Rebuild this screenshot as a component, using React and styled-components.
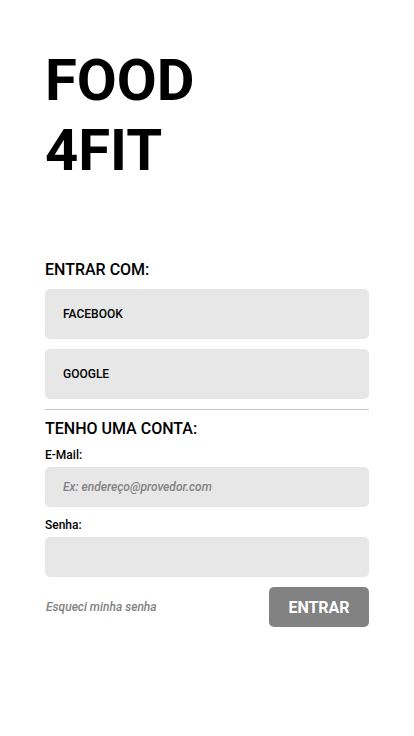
import React from "react";
import styled, { createGlobalStyle } from "styled-components";

const GlobalStyle = createGlobalStyle`
  *, *::before, *::after { box-sizing: border-box; }
  body {
    margin: 0;
    background: #fff;
    color: #000;
    font-family: Roboto, sans-serif;
  }
`;

const Page = styled.main`
  display: flex;
  flex-direction: column;
  padding: 45px 45px 40px;
`;

const Brand = styled.h1`
  margin: 0 0 76px;
  font-size: 58px;
  line-height: 70px;
  font-weight: 700;
`;

const BrandLine = styled.span`
  display: block;
`;

const Section = styled.section`
  display: flex;
  flex-direction: column;
  gap: ${({ $gap }) => $gap}px;
`;

const SectionTitle = styled.h2`
  margin: 0;
  font-size: 16px;
  line-height: 18px;
  font-weight: 500;
`;

const ProviderList = styled.div`
  display: flex;
  flex-direction: column;
  gap: 10px;
`;

const ProviderButton = styled.button`
  height: 50px;
  padding: 0 18px;
  border: 0;
  border-radius: 5px;
  background: #e7e7e7;
  color: #000;
  font: 500 12px/14px Roboto, sans-serif;
  text-align: left;
  cursor: pointer;
`;

const Divider = styled.hr`
  width: 100%;
  height: 1px;
  margin: 10px 0;
  border: 0;
  background: #c4c4c4;
`;

const Form = styled.form`
  display: flex;
  flex-direction: column;
  gap: 10px;
`;

const Field = styled.div`
  display: flex;
  flex-direction: column;
  gap: 4px;
`;

const Label = styled.label`
  font-size: 12px;
  line-height: 16px;
  font-weight: 500;
`;

const Input = styled.input`
  width: 100%;
  height: 40px;
  padding: 0 18px;
  border: 0;
  border-radius: 5px;
  background: #e7e7e7;
  color: #000;
  font: 500 12px/14px Roboto, sans-serif;

  &::placeholder {
    color: #828282;
    font-style: italic;
    opacity: 1;
  }
`;

const Actions = styled.div`
  display: flex;
  align-items: center;
  justify-content: space-between;
`;

const ForgotLink = styled.a`
  padding-left: 1px;
  color: #828282;
  font-size: 12px;
  line-height: 14px;
  font-style: italic;
  font-weight: 500;
  text-decoration: none;
`;

const SubmitButton = styled.button`
  width: 100px;
  height: 40px;
  padding: 0;
  border: 0;
  border-radius: 5px;
  background: #828282;
  color: #fff;
  font: 700 16px/19px Roboto, sans-serif;
  cursor: pointer;
`;

export default function App() {
  return (
    <>
      <GlobalStyle />
      <Page>
        <Brand>
          <BrandLine>FOOD</BrandLine>
          <BrandLine>4FIT</BrandLine>
        </Brand>
        <Section $gap={10}>
          <SectionTitle>ENTRAR COM:</SectionTitle>
          <ProviderList>
            <ProviderButton type="button">FACEBOOK</ProviderButton>
            <ProviderButton type="button">GOOGLE</ProviderButton>
          </ProviderList>
        </Section>
        <Divider />
        <Section $gap={9}>
          <SectionTitle>TENHO UMA CONTA:</SectionTitle>
          <Form onSubmit={(event) => event.preventDefault()}>
            <Field>
              <Label htmlFor="email">E-Mail:</Label>
              <Input id="email" type="email" placeholder="Ex: endereço@provedor.com" />
            </Field>
            <Field>
              <Label htmlFor="password">Senha:</Label>
              <Input id="password" type="password" />
            </Field>
            <Actions>
              <ForgotLink href="#recuperar">Esqueci minha senha</ForgotLink>
              <SubmitButton type="submit">ENTRAR</SubmitButton>
            </Actions>
          </Form>
        </Section>
      </Page>
    </>
  );
}
